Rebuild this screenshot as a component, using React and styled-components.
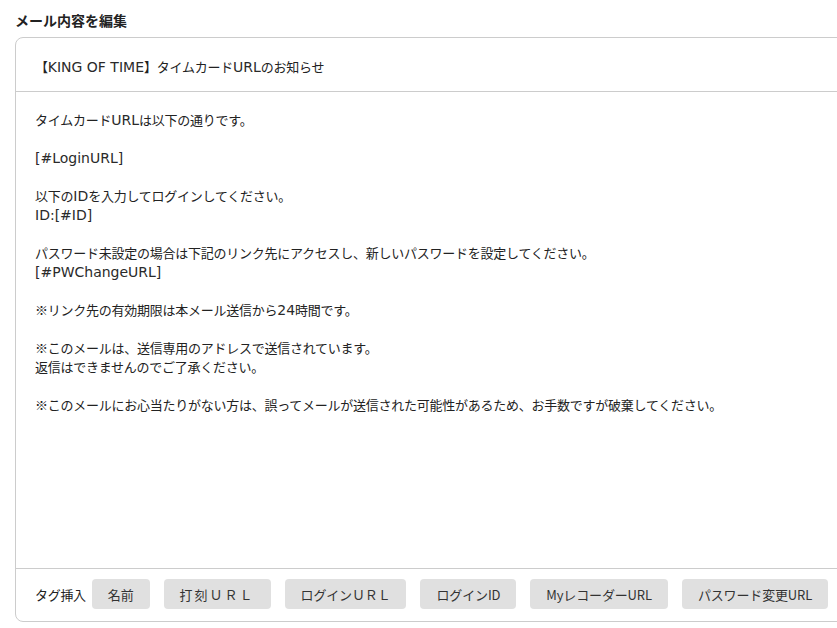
import React from "react";
import styled, { createGlobalStyle } from "styled-components";

const Global = createGlobalStyle`
  html, body { margin: 0; padding: 0; background: #fff; overflow: hidden; }
  body { font-family: "Noto Sans CJK JP", "Noto Sans", sans-serif; color: #222; }
`;

const Page = styled.div`
  padding: 10px 0 0 15px;
  width: 860px;
`;

const Heading = styled.h2`
  margin: 0 0 7px 0;
  font-size: 14px;
  line-height: 20px;
  font-weight: 700;
  color: #222;
`;

const Card = styled.div`
  border: 1px solid #ccc;
  border-radius: 8px;
  width: 840px;
  height: 585px;
  display: flex;
  flex-direction: column;
  box-sizing: border-box;
`;

const Subject = styled.div`
  padding: 19px 19px 15px;
  font-size: 13px;
  line-height: 19px;
  letter-spacing: -0.25px;
  border-bottom: 1px solid #ccc;
`;

const Body = styled.div`
  flex: 1;
  padding: 18px 19px;
  font-size: 13px;
  line-height: 19px;
  letter-spacing: -0.25px;
`;

const Line = styled.div`
  min-height: 19px;
  white-space: nowrap;
`;

const Latin = styled.span`
  font-family: "DejaVu Sans", "Noto Sans", sans-serif;
  font-size: 14px;
  line-height: 1;
  letter-spacing: 0;
  color: #2a2a2a;
`;

const Footer = styled.div`
  border-top: 1px solid #ccc;
  padding: 10px 19px 12px;
  display: flex;
  align-items: center;
  gap: 14px;
  white-space: nowrap;
`;

const TagLabel = styled.span`
  flex-shrink: 0;
  font-size: 13px;
  letter-spacing: -0.3px;
  margin-right: -8px;
`;

const TagButton = styled.button`
  flex-shrink: 0;
  height: 30px;
  padding: 0 16px;
  border: none;
  border-radius: 4px;
  background: #e0e0e0;
  color: #333;
  font-family: inherit;
  font-size: 13px;
  white-space: nowrap;
  letter-spacing: ${(p) => (p.$spaced ? "2px" : "-0.15px")};
  cursor: pointer;
`;

function Mixed({ text }) {
  const parts = text.split(/([\x21-\x7E](?:[\x20-\x7E]*[\x21-\x7E])?)/);
  return parts.map((p, i) =>
    i % 2 === 1 ? <Latin key={i}>{p}</Latin> : <React.Fragment key={i}>{p}</React.Fragment>
  );
}

const bodyText = `タイムカードURLは以下の通りです。

[#LoginURL]

以下のIDを入力してログインしてください。
ID:[#ID]

パスワード未設定の場合は下記のリンク先にアクセスし、新しいパスワードを設定してください。
[#PWChangeURL]

※リンク先の有効期限は本メール送信から24時間です。

※このメールは、送信専用のアドレスで送信されています。
返信はできませんのでご了承ください。

※このメールにお心当たりがない方は、誤ってメールが送信された可能性があるため、お手数ですが破棄してください。`;

const tags = [
  { label: "名前" },
  { label: "打刻ＵＲＬ", spaced: true },
  { label: "ログインＵＲＬ" },
  { label: "ログインID" },
  { label: "MyレコーダーURL" },
  { label: "パスワード変更URL" },
];

export default function App() {
  return (
    <>
      <Global />
      <Page>
        <Heading>メール内容を編集</Heading>
        <Card>
          <Subject>
            <Mixed text="【KING OF TIME】タイムカードURLのお知らせ" />
          </Subject>
          <Body>
            {bodyText.split("\n").map((line, i) => (
              <Line key={i}>
                <Mixed text={line} />
              </Line>
            ))}
          </Body>
          <Footer>
            <TagLabel>タグ挿入</TagLabel>
            {tags.map((t) => (
              <TagButton key={t.label} $spaced={t.spaced}>
                {t.label}
              </TagButton>
            ))}
          </Footer>
        </Card>
      </Page>
    </>
  );
}
